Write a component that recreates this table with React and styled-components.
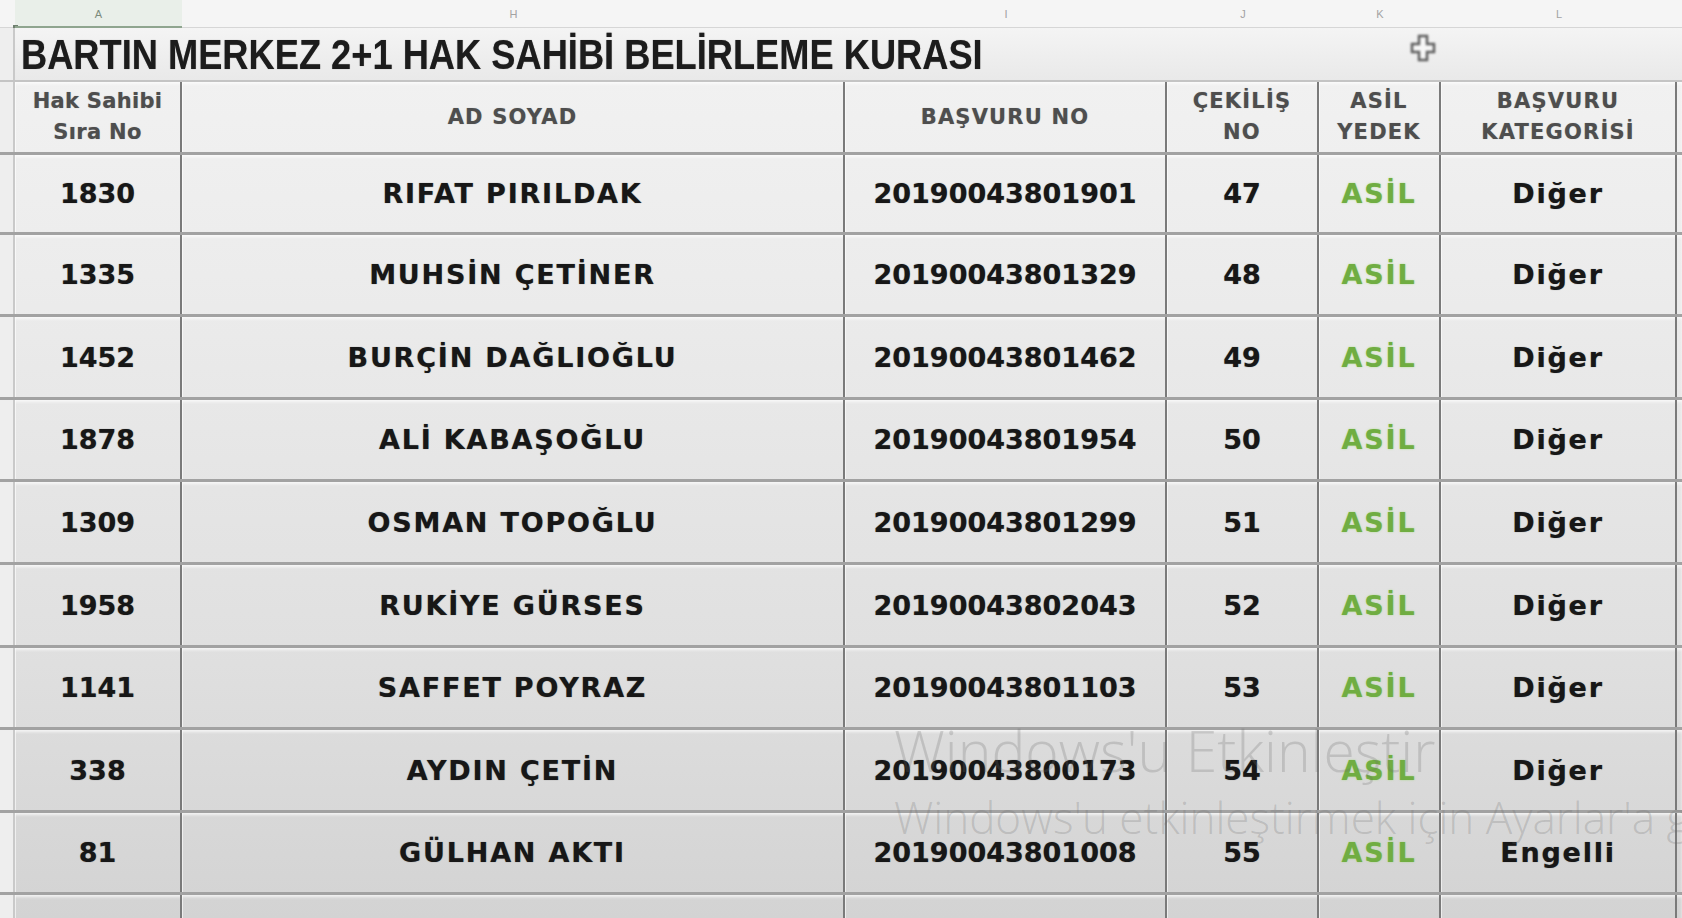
import React from "react";
import styled, { createGlobalStyle, css } from "styled-components";

const GlobalStyle = createGlobalStyle`
  *, *::before, *::after {
    box-sizing: border-box;
  }
  html, body {
    margin: 0;
    padding: 0;
    background: #e4e4e4;
    font-family: "DejaVu Sans", "Liberation Sans", sans-serif;
  }
`;

const COLS = "15px 167px 663px 322px 152px 122px 236px 1fr";

const Sheet = styled.div`
  position: relative;
  width: 1682px;
  height: 918px;
  overflow: hidden;
  display: flex;
  flex-direction: column;
  background: linear-gradient(180deg, #f3f3f3 0%, #ececec 30%, #e0e0e0 70%, #d3d3d3 100%);
`;

const ColumnBar = styled.div`
  display: grid;
  grid-template-columns: ${COLS};
  height: 28px;
  flex: none;
  background: #f5f5f5;
  border-bottom: 1px solid #d6d6d6;
`;

const ColLetter = styled.div`
  display: flex;
  align-items: center;
  justify-content: center;
  font-family: "Liberation Sans", Arial, sans-serif;
  font-size: 11px;
  color: #a3a3a3;
  position: relative;
  ${(p) =>
    p.$selected &&
    css`
      background: #e9efe9;
      color: #7c8c7c;
      &::after {
        content: "";
        position: absolute;
        left: 0;
        right: 0;
        bottom: -2px;
        height: 3px;
        background: #8fa58f;
      }
      &::before {
        content: "";
        position: absolute;
        left: -2px;
        bottom: -3px;
        width: 5px;
        height: 5px;
        background: #6f7f6f;
      }
    `}
`;

const TitleBar = styled.div`
  display: grid;
  grid-template-columns: 15px 1fr;
  height: 54px;
  flex: none;
  background: linear-gradient(180deg, #f4f4f4, #e9e9e9);
  border-bottom: 2px solid #c4c4c4;
  position: relative;
`;

const Title = styled.h1`
  margin: 0;
  display: flex;
  align-items: center;
  padding-left: 6px;
  font-family: "Liberation Sans", Arial, sans-serif;
  font-weight: 700;
  font-size: 43px;
  color: #1c1c1c;
  white-space: nowrap;
  text-shadow: 0 0 1px rgba(0, 0, 0, 0.45);

  span {
    display: inline-block;
    transform: scaleX(0.843);
    transform-origin: left center;
  }
`;

const Cursor = styled.svg`
  position: absolute;
  left: 1410px;
  top: 6px;
  filter: blur(1.2px);
  opacity: 0.8;
`;

const RowHead = styled.div`
  background: #eeeeee;
  border-right: 2px solid #c9c9c9;
`;

const Row = styled.div`
  display: grid;
  grid-template-columns: ${COLS};
  flex: none;
  height: ${(p) => p.$h}px;
  border-bottom: 3px solid #a2a2a2;
  box-shadow: inset 0 2px 3px rgba(255, 255, 255, 0.7);
`;

const Cell = styled.div`
  display: flex;
  flex-direction: column;
  align-items: center;
  justify-content: center;
  text-align: center;
  border-right: 2px solid #7a7a7a;
  color: ${(p) => (p.$green ? "#70ad42" : "#171717")};
  font-weight: 700;
  font-size: 27px;
  letter-spacing: ${(p) => (p.$spaced ? "1.8px" : "0")};
  text-shadow: ${(p) =>
    p.$green
      ? "0 0 2px rgba(150, 215, 100, 0.7)"
      : "0 0 1px rgba(0, 0, 0, 0.5)"};
  box-shadow: inset 1px 0 0 rgba(255, 255, 255, 0.6);
`;

const HeadCell = styled(Cell)`
  font-size: 21px;
  line-height: 31px;
  letter-spacing: 1.2px;
  color: #4e4e4e;
  text-shadow: 0 0 1px rgba(0, 0, 0, 0.3);
`;

const HeadSmall = styled.span`
  letter-spacing: 0.3px;
`;

const Watermark = styled.div`
  position: absolute;
  left: 894px;
  top: 716px;
  font-family: "Open Sans", "Noto Sans", sans-serif;
  font-weight: 300;
  color: rgba(105, 105, 105, 0.24);
  white-space: nowrap;
  pointer-events: none;
`;

const WatermarkLine = styled.div`
  font-size: ${(p) => p.$size}px;
  line-height: ${(p) => p.$lh}px;
`;

const rows = [
  ["1830", "RIFAT PIRILDAK", "20190043801901", "47", "Diğer"],
  ["1335", "MUHSİN ÇETİNER", "20190043801329", "48", "Diğer"],
  ["1452", "BURÇİN DAĞLIOĞLU", "20190043801462", "49", "Diğer"],
  ["1878", "ALİ KABAŞOĞLU", "20190043801954", "50", "Diğer"],
  ["1309", "OSMAN TOPOĞLU", "20190043801299", "51", "Diğer"],
  ["1958", "RUKİYE GÜRSES", "20190043802043", "52", "Diğer"],
  ["1141", "SAFFET POYRAZ", "20190043801103", "53", "Diğer"],
  ["338", "AYDIN ÇETİN", "20190043800173", "54", "Diğer"],
  ["81", "GÜLHAN AKTI", "20190043801008", "55", "Engelli"],
];

const heights = [80, 82, 83, 82, 83, 83, 82, 83, 82];

const letters = ["A", "H", "I", "J", "K", "L"];

export default function App() {
  return (
    <>
      <GlobalStyle />
      <Sheet>
        <ColumnBar>
          <div />
          {letters.map((l, i) => (
            <ColLetter key={l} $selected={i === 0}>
              {l}
            </ColLetter>
          ))}
          <div />
        </ColumnBar>

        <TitleBar>
          <RowHead />
          <Title>
            <span>BARTIN MERKEZ 2+1 HAK SAHİBİ BELİRLEME KURASI</span>
          </Title>
          <Cursor width="26" height="28" viewBox="0 0 26 28">
            <path
              d="M9 2h8v8h7v8h-7v8H9v-8H2v-8h7z"
              fill="#fafafa"
              stroke="#3a3a3a"
              strokeWidth="2.5"
            />
          </Cursor>
        </TitleBar>

        <Row $h={73}>
          <RowHead />
          <HeadCell>
            <HeadSmall>Hak Sahibi</HeadSmall>
            <HeadSmall>Sıra No</HeadSmall>
          </HeadCell>
          <HeadCell>AD SOYAD</HeadCell>
          <HeadCell>BAŞVURU NO</HeadCell>
          <HeadCell>
            <span>ÇEKİLİŞ</span>
            <span>NO</span>
          </HeadCell>
          <HeadCell>
            <span>ASİL</span>
            <span>YEDEK</span>
          </HeadCell>
          <HeadCell>
            <span>BAŞVURU</span>
            <span>KATEGORİSİ</span>
          </HeadCell>
          <div />
        </Row>

        {rows.map((r, i) => (
          <Row key={r[2]} $h={heights[i]}>
            <RowHead />
            <Cell>{r[0]}</Cell>
            <Cell $spaced>{r[1]}</Cell>
            <Cell>{r[2]}</Cell>
            <Cell>{r[3]}</Cell>
            <Cell $green $spaced>
              ASİL
            </Cell>
            <Cell $spaced>{r[4]}</Cell>
            <div />
          </Row>
        ))}

        <Row $h={40}>
          <RowHead />
          <Cell />
          <Cell />
          <Cell />
          <Cell />
          <Cell />
          <Cell />
          <div />
        </Row>

        <Watermark>
          <WatermarkLine $size={57} $lh={68}>
            Windows'u Etkinleştir
          </WatermarkLine>
          <WatermarkLine $size={44} $lh={66}>
            Windows'u etkinleştirmek için Ayarlar'a git.
          </WatermarkLine>
        </Watermark>
      </Sheet>
    </>
  );
}
